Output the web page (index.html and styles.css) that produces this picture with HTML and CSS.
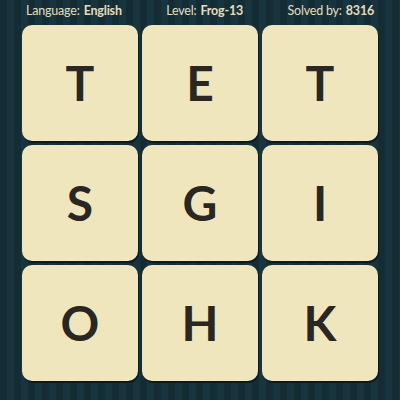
FILE: index.html
```html
<!DOCTYPE html>
<html>
<head>
<meta charset="utf-8">
<link rel="stylesheet" href="styles.css">
</head>
<body>
<div class="page">
  <div class="header">
    <span class="info">Language: <b>English</b></span>
    <span class="info">Level: <b>Frog-13</b></span>
    <span class="info">Solved by: <b>8316</b></span>
  </div>
  <div class="board">
    <div class="tile">T</div>
    <div class="tile">E</div>
    <div class="tile">T</div>
    <div class="tile">S</div>
    <div class="tile">G</div>
    <div class="tile">I</div>
    <div class="tile">O</div>
    <div class="tile">H</div>
    <div class="tile">K</div>
  </div>
</div>
</body>
</html>
```

FILE: styles.css
```css
html, body {
  margin: 0;
  padding: 0;
}
body {
  width: 400px;
  height: 400px;
  overflow: hidden;
  font-family: Lato, "Open Sans", sans-serif;
}
.page {
  width: 400px;
  height: 400px;
  background-color: #163039;
  background-image: repeating-linear-gradient(90deg,
    #142d35 0px, #142d35 7px,
    #18343e 7px, #18343e 14px);
}
.header {
  height: 25px;
  display: flex;
  justify-content: space-between;
  align-items: center;
  padding: 0 26px 0 26px;
  box-sizing: border-box;
}
.info {
  color: #e4ddbd;
  font-size: 12.5px;
  letter-spacing: -0.2px;
  line-height: 1;
  padding-bottom: 3px;
}
.info b {
  font-weight: 700;
  margin-left: 1px;
}
.board {
  margin-left: 22px;
  display: grid;
  grid-template-columns: repeat(3, 116px);
  grid-auto-rows: 116px;
  gap: 4px;
}
.tile {
  background: #efe6be;
  border-radius: 10px;
  box-shadow: 1px 2px 0 #0b1a1f;
  display: flex;
  align-items: center;
  justify-content: center;
  color: #2a2621;
  font-size: 48px;
  font-weight: 700;
  line-height: 1;
}
```
